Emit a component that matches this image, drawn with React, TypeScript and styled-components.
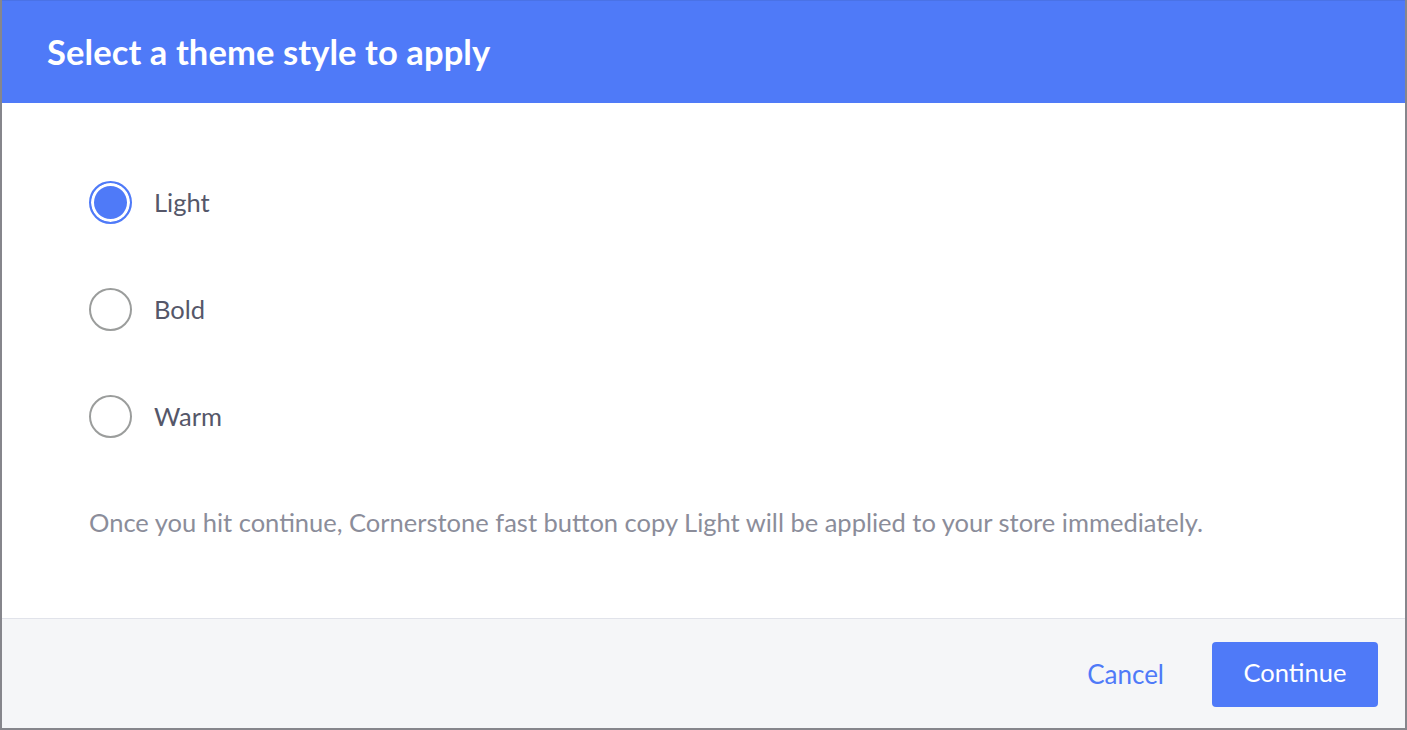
import * as React from "react";
import styled, { createGlobalStyle } from "styled-components";

const GlobalStyle = createGlobalStyle`
  html, body {
    margin: 0;
    padding: 0;
    background: #86868c;
  }
  body {
    font-family: Lato, "Open Sans", "Liberation Sans", sans-serif;
  }
`;

const Modal = styled.div`
  display: flex;
  flex-direction: column;
  height: 728px;
  margin: 0 2px;
  background: #ffffff;
`;

const Header = styled.div`
  display: flex;
  align-items: center;
  height: 103px;
  padding-left: 45px;
  background: #4f7af8;
  border-top: 1px solid #4a72e6;
  box-sizing: border-box;
`;

const Title = styled.h1`
  margin: 0 0 2px;
  color: #ffffff;
  font-size: 34.5px;
  font-weight: 700;
  letter-spacing: 0.1px;
`;

const Body = styled.div`
  flex: 1;
  display: flex;
  flex-direction: column;
  padding: 78px 87px 0;
`;

const Options = styled.div`
  display: flex;
  flex-direction: column;
  gap: 64px;
`;

const Option = styled.label`
  display: flex;
  align-items: center;
  gap: 22px;
  cursor: pointer;
`;

const Radio = styled.span<{ $checked: boolean }>`
  width: 43px;
  height: 43px;
  border-radius: 50%;
  box-sizing: border-box;
  border: 2px solid ${p => (p.$checked ? "#4f7af8" : "#9b9d9c")};
  background: ${p => (p.$checked ? "#4f7af8" : "#ffffff")};
  box-shadow: ${p => (p.$checked ? "inset 0 0 0 3px #ffffff" : "none")};
  flex-shrink: 0;
`;

const OptionLabel = styled.span`
  color: #555769;
  font-size: 25.5px;
  margin-bottom: 2px;
`;

const Note = styled.p`
  margin: 70px 0 0;
  color: #8b8d9a;
  font-size: 25.5px;
  line-height: 28px;
`;

const Footer = styled.div`
  display: flex;
  align-items: flex-start;
  justify-content: flex-end;
  gap: 48px;
  height: 110px;
  box-sizing: border-box;
  padding: 23px 27px 0 0;
  background: #f5f6f8;
  border-top: 1px solid #e1e3ea;
`;

const TextButton = styled.button`
  margin-top: 16px;
  padding: 0;
  border: none;
  background: none;
  color: #4f7af8;
  font-family: inherit;
  font-size: 26px;
  cursor: pointer;
`;

const PrimaryButton = styled.button`
  width: 166px;
  height: 65px;
  padding-bottom: 6px;
  border: none;
  border-radius: 4px;
  background: #4f7af8;
  color: #ffffff;
  font-family: inherit;
  font-size: 25.5px;
  cursor: pointer;
`;

const themes = ["Light", "Bold", "Warm"];

export default function App() {
  const [selected, setSelected] = React.useState("Light");
  return (
    <>
      <GlobalStyle />
      <Modal>
        <Header>
          <Title>Select a theme style to apply</Title>
        </Header>
        <Body>
          <Options>
            {themes.map(t => (
              <Option key={t} onClick={() => setSelected(t)}>
                <Radio $checked={selected === t} />
                <OptionLabel>{t}</OptionLabel>
              </Option>
            ))}
          </Options>
          <Note>
            Once you hit continue, Cornerstone fast button copy {selected} will be applied to your
            store immediately.
          </Note>
        </Body>
        <Footer>
          <TextButton>Cancel</TextButton>
          <PrimaryButton>Continue</PrimaryButton>
        </Footer>
      </Modal>
    </>
  );
}
